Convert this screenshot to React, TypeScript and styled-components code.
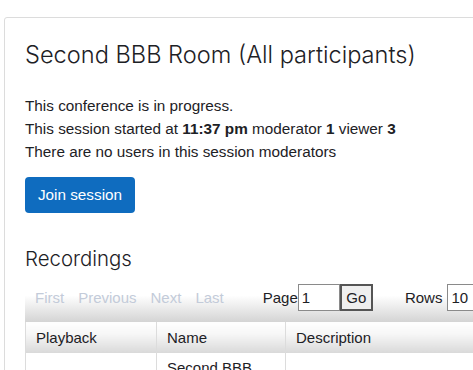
import React from "react";
import styled, { createGlobalStyle } from "styled-components";

const Global = createGlobalStyle`
  html, body { margin: 0; padding: 0; background: #fff; overflow: hidden; }
  body { font-family: "Liberation Sans", Arial, sans-serif; color: #1d2125; }
  * { box-sizing: border-box; }
`;

const Page = styled.div`
  padding: 17px 0 0 4px;
  width: 700px;
`;

const Card = styled.div`
  border: 1px solid #dcdcdc;
  border-radius: 3px 0 0 0;
  padding: 22px 20px 40px 20px;
  width: 680px;
`;

const Title = styled.h2`
  margin: 0 0 24px 0;
  font-family: Inter, "Liberation Sans", sans-serif;
  font-size: 23.6px;
  font-weight: 300;
  line-height: 30px;
  color: #1d2125;
`;

const Line = styled.p`
  margin: 0;
  font-size: 15.3px;
  line-height: 23px;
`;

const JoinButton = styled.button`
  display: block;
  margin-top: 14px;
  width: 110px;
  height: 36px;
  border: none;
  border-radius: 4px;
  background: #0f6cbf;
  color: #fff;
  font-family: inherit;
  font-size: 15.3px;
  padding: 0;
`;

const SectionTitle = styled.h3`
  margin: 33px 0 12px 0;
  font-family: Inter, "Liberation Sans", sans-serif;
  font-size: 20.4px;
  font-weight: 300;
  line-height: 26px;
`;

const Pager = styled.div`
  display: flex;
  align-items: flex-start;
  height: 38px;
  padding: 0 0 0 10px;
  background: linear-gradient(#fff 0%, #fff 30%, #d4d4d4 100%);
  font-size: 15px;
  line-height: 27px;
  width: 460px;
`;

const NavLink = styled.span`
  color: #c3cbd9;
  margin-right: 14px;
`;

const Spacer = styled.span<{ $w: number }>`
  display: inline-block;
  width: ${(p) => p.$w}px;
`;

const Label = styled.span`
  color: #1d2125;
`;

const PageInput = styled.div`
  width: 45px;
  height: 27px;
  border: 1px solid #8a8a8a;
  background: #fff;
  padding: 0 3px;
  line-height: 25px;
`;

const GoButton = styled.div`
  width: 35px;
  height: 27px;
  border: 2px solid #555;
  background: #efefef;
  text-align: center;
  line-height: 23px;
`;

const RowsSelect = styled.div`
  margin-left: 5px;
  width: 40px;
  height: 27px;
  border: 1px solid #8a8a8a;
  background: #fff;
  padding: 0 3px;
  line-height: 25px;
`;

const Table = styled.table`
  border-collapse: collapse;
  width: 600px;
  font-size: 15px;
`;

const Th = styled.th<{ $w?: number }>`
  text-align: left;
  font-weight: 400;
  height: 31px;
  padding: 0 10px;
  width: ${(p) => (p.$w ? `${p.$w}px` : "auto")};
  background: linear-gradient(#fff 0%, #f6f6f6 40%, #d9d9d9 100%);
  border-left: 1px solid #dcdcdc;
`;

const Td = styled.td`
  border-left: 1px solid #dcdcdc;
  padding: 6px 10px;
  vertical-align: top;
  line-height: 18px;
  height: 40px;
`;

export default function App() {
  return (
    <>
      <Global />
      <Page>
        <Card>
          <Title>Second BBB Room (All participants)</Title>
          <Line>This conference is in progress.</Line>
          <Line>
            This session started at <b>11:37 pm</b> moderator <b>1</b> viewer <b>3</b>
          </Line>
          <Line>There are no users in this session moderators</Line>
          <JoinButton>Join session</JoinButton>
          <SectionTitle>Recordings</SectionTitle>
          <Pager>
            <NavLink>First</NavLink>
            <NavLink>Previous</NavLink>
            <NavLink>Next</NavLink>
            <NavLink>Last</NavLink>
            <Spacer $w={27} />
            <Label>Page</Label>
            <PageInput>1</PageInput>
            <GoButton>Go</GoButton>
            <Spacer $w={35} />
            <Label>Rows</Label>
            <RowsSelect>10</RowsSelect>
          </Pager>
          <Table>
            <thead>
              <tr>
                <Th $w={131}>Playback</Th>
                <Th $w={129}>Name</Th>
                <Th>Description</Th>
              </tr>
            </thead>
            <tbody>
              <tr>
                <Td></Td>
                <Td>Second BBB Room</Td>
                <Td></Td>
              </tr>
            </tbody>
          </Table>
        </Card>
      </Page>
    </>
  );
}
